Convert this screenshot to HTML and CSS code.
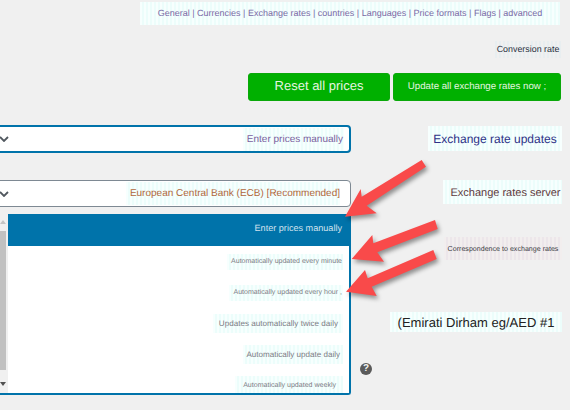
FILE: index.html
```html
<!DOCTYPE html>
<html lang="en">
<head>
<meta charset="utf-8">
<title>Exchange rates settings</title>
<link rel="stylesheet" href="styles.css">
</head>
<body>
<div class="page">
  <nav class="nav"><span class="nav-text tint-cyan">General | Currencies | Exchange rates | countries | Languages | Price formats | Flags | advanced</span></nav>
  <div class="rate-row"><span class="rate-text tint-grey">Conversion rate</span></div>
  <div class="buttons">
    <button class="btn btn-reset" type="button">Reset all prices</button>
    <button class="btn btn-update" type="button">Update all exchange rates now ;</button>
  </div>
  <div class="main">
    <div class="left">
      <div class="select select-focus">
        <svg class="chev" width="10" height="6" viewBox="0 0 10 6"><path d="M1 1l4 4 4-4" fill="none" stroke="#50575e" stroke-width="1.8"/></svg>
        <span class="select-text purple tint-cyan">Enter prices manually</span>
      </div>
      <div class="select select-plain">
        <svg class="chev" width="10" height="6" viewBox="0 0 10 6"><path d="M1 1l4 4 4-4" fill="none" stroke="#50575e" stroke-width="1.8"/></svg>
        <span class="select-text orange tint-cyan">European Central Bank (ECB) [Recommended]</span>
      </div>
      <div class="dropdown">
        <div class="scrollbar">
          <span class="scroll-up"></span>
          <span class="scroll-thumb"></span>
          <span class="scroll-down"></span>
        </div>
        <ul class="options">
          <li class="option option-active"><span class="opt opt-active">Enter prices manually</span></li>
          <li class="option"><span class="opt opt-minute tint-cyan">Automatically updated every minute</span></li>
          <li class="option"><span class="opt opt-hour tint-cyan">Automatically updated every hour ,</span></li>
          <li class="option"><span class="opt opt-twice tint-cyan">Updates automatically twice daily</span></li>
          <li class="option"><span class="opt opt-daily tint-cyan">Automatically update daily</span></li>
          <li class="option"><span class="opt opt-weekly tint-cyan">Automatically updated weekly</span></li>
        </ul>
      </div>
    </div>
    <div class="right">
      <span class="label label-updates tint-cyan">Exchange rate updates</span>
      <span class="label label-server tint-cyan">Exchange rates server</span>
      <span class="label label-corr tint-pink">Correspondence to exchange rates</span>
      <span class="label label-aed tint-cyan">(Emirati Dirham eg/AED #1</span>
      <span class="help">?</span>
    </div>
  </div>
  <svg class="arrows" width="570" height="410" viewBox="0 0 570 410">
    <path class="arrow" d="M421.7 160L426 166.7 366.7 205.7 376.7 213.3 345 216.7 360.7 189 361.7 196.7z"/>
    <path class="arrow" d="M435 220L437.7 229 377.3 252.3 384 261.7 351.7 259 372.3 235 373.3 243.3z"/>
    <path class="arrow" d="M433.3 250L436.7 259 371.7 286.7 376.7 296 346 291.7 365 270 367.7 278.3z"/>
  </svg>
</div>
</body>
</html>
```
FILE: styles.css
```css
* { box-sizing: border-box; }
html, body { margin: 0; padding: 0; }
body {
  width: 570px;
  height: 410px;
  overflow: hidden;
  background: #f0f0f0;
  font-family: "Liberation Sans", Arial, sans-serif;
  text-rendering: geometricPrecision;
}
.page { position: relative; width: 570px; height: 410px; overflow: hidden; }

.tint-cyan { background: repeating-linear-gradient(90deg, #f7fffe 0 2px, #ecfdfb 2px 4px); }
.tint-grey { background: repeating-linear-gradient(90deg, #f0f0f0 0 2px, #e8eef0 2px 4px); }
.tint-pink { background: repeating-linear-gradient(90deg, #f2eeee 0 2px, #ece6ea 2px 4px); }

.nav { display: flex; justify-content: flex-end; padding: 2px 10px 0 0; }
.nav-text {
  display: flex; align-items: center; justify-content: center;
  width: 420px; height: 23px; padding-bottom: 1px;
  font-size: 9px; color: #7a6ba6; white-space: nowrap;
}
.rate-row { display: flex; justify-content: flex-end; padding: 16px 8px 0 0; }
.rate-text {
  display: flex; align-items: center; justify-content: center;
  width: 69px; height: 17px; padding: 0 0 2px 1px;
  font-size: 8.9px; color: #2a3040; white-space: nowrap;
}
.buttons { display: flex; justify-content: flex-end; gap: 3px; padding: 15px 9px 0 0; }
.btn {
  height: 28px; padding: 0; border: 1px solid #0aa80a; border-radius: 3px;
  background: #00b000; color: #e6f5e0; font-family: inherit; white-space: nowrap;
  text-rendering: geometricPrecision;
}
.btn-reset { width: 142px; font-size: 13px; padding-bottom: 3px; }
.btn-update { width: 168px; font-size: 9.7px; padding-bottom: 1px; }

.main { display: grid; grid-template-columns: 351px 1fr; padding-top: 24px; }
.left { display: flex; flex-direction: column; }
.select {
  display: flex; align-items: center; justify-content: space-between;
  margin-left: -20px; background: #fff;
}
.select-focus { height: 28px; border: 2px solid #0073aa; border-radius: 4px; padding: 0 5px 0 17px; }
.select-plain { height: 27px; margin-top: 27px; border: 1px solid #7e8993; border-radius: 4px; padding: 0 10px 0 18px; }
.chev { flex: none; }
.select-text { display: flex; align-items: center; height: 23px; white-space: nowrap; }
.purple { color: #7b5f9e; font-size: 10px; padding: 0 1px 0 4px; }
.orange { color: #b0683c; font-size: 10px; padding: 0 0 0 4px; }

.dropdown {
  display: flex; height: 181px; margin-top: 7px; overflow: hidden;
  border-right: 2px solid #0073aa; border-bottom: 2px solid #0073aa;
  border-bottom-right-radius: 3px; background: #fff;
}
.scrollbar {
  flex: none; width: 8px; display: flex; flex-direction: column; align-items: stretch;
  background: #f0f0f0;
}
.scroll-up {
  width: 0; height: 0; margin: 6px 0 7px;
  border-left: 3px solid transparent; border-right: 3px solid transparent;
  border-bottom: 4px solid #c4c4c4;
}
.scroll-thumb { height: 139px; width: 6px; background: #c1c1c1; }
.scroll-down {
  width: 0; height: 0; margin-top: 12px;
  border-left: 3px solid transparent; border-right: 3px solid transparent;
  border-top: 4px solid #505050;
}
.options { flex: 1; margin: 0; padding: 0; list-style: none; }
.option {
  display: flex; align-items: center; justify-content: flex-end;
  height: 31px; padding-right: 6px; white-space: nowrap; color: #7c7c84;
}
.option-active { height: 32px; padding-bottom: 5px; background: #0073aa; color: #d2e2ee; }
.opt { display: flex; align-items: center; height: 20px; }
.opt-active { font-size: 9.1px; padding-right: 1px; }
.opt-minute { font-size: 7px; height: 16px; padding: 0 1px 0 4px; }
.opt-hour { font-size: 7.05px; height: 16px; padding: 0 1px 0 4px; }
.opt-twice { font-size: 8.1px; height: 19px; padding: 0 5px 0 6px; }
.opt-daily { font-size: 8.05px; height: 19px; padding: 0 3px 0 4px; }
.opt-weekly { font-size: 7.05px; height: 20px; padding: 0 7px 0 8px; }

.right { display: flex; flex-direction: column; align-items: flex-end; padding-right: 8px; }
.label { display: flex; align-items: center; justify-content: center; white-space: nowrap; }
.label-updates { width: 134px; height: 25px; margin-top: 1px; font-size: 12px; color: #2e3288; }
.label-server { width: 119px; height: 24px; margin-top: 29px; padding: 2px 0 0 6px; font-size: 11px; color: #5e3a40; }
.label-corr { width: 118px; height: 23px; margin-top: 33px; font-size: 7.1px; color: #3c3c44; }
.label-aed { width: 172px; height: 20px; margin-top: 52px; font-size: 13px; color: #222; }
.help {
  align-self: flex-start; margin: 31px 0 0 9px;
  display: flex; align-items: center; justify-content: center;
  width: 12px; height: 12px; border-radius: 50%;
  background: #5a5a5a; color: #f0f0f0; font-size: 10px; font-weight: 700; line-height: 1;
}

.arrows { position: absolute; left: 0; top: 0; pointer-events: none; }
.arrow { fill: #f94a4a; filter: drop-shadow(2px 3px 2px rgba(0,0,0,.4)); }
```
